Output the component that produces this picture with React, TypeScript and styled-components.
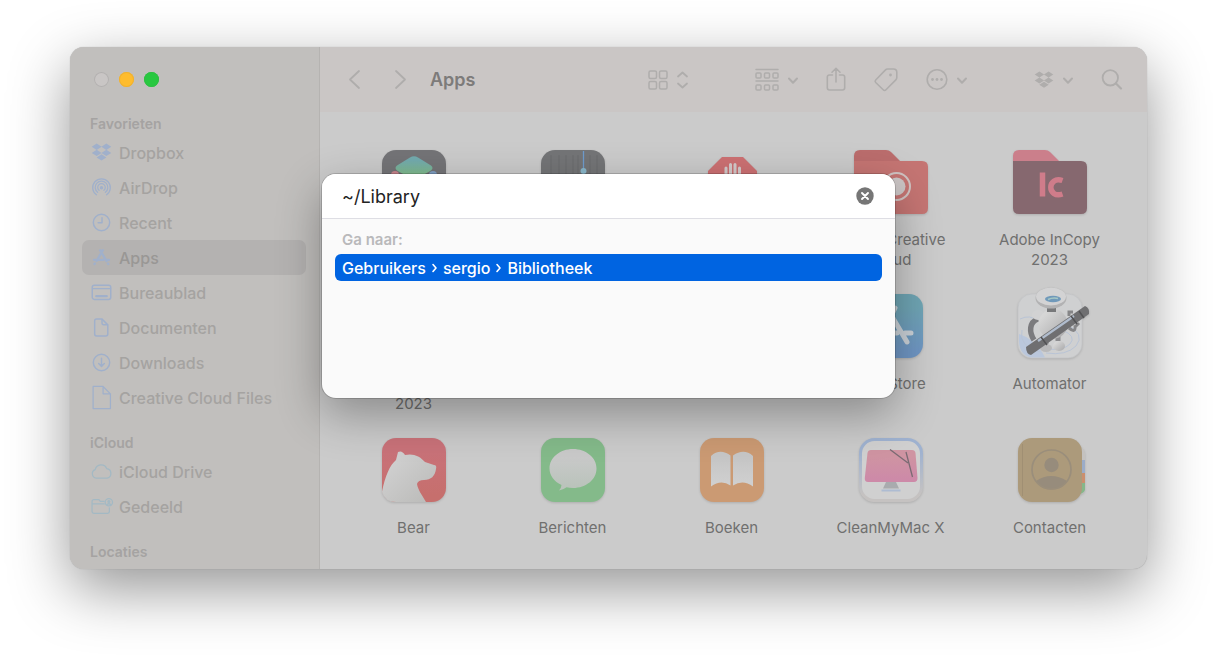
import React from "react";
import styled, { createGlobalStyle } from "styled-components";

const Global = createGlobalStyle`
  * { box-sizing: border-box; }
  body { margin: 0; background: #fff; font-family: Inter, "Liberation Sans", sans-serif; }
  button, input { font: inherit; border: 0; padding: 0; margin: 0; background: none; color: inherit; }
  svg { display: block; flex: none; overflow: visible; }
  ul { list-style: none; margin: 0; padding: 0; }
`;

const Desktop = styled.div`
  padding: 47px 69px 92px 70px;
`;

const Window = styled.main`
  position: relative;
  display: grid;
  grid-template-columns: 250px minmax(0, 1fr);
  border-radius: 14px;
  background: #cbcbcb;
  box-shadow: 0 0 1px rgba(0, 0, 0, 0.3), 0 20px 60px rgba(0, 0, 0, 0.42);
`;

const Sidebar = styled.nav`
  padding: 25px 13px 5px 12px;
  border-right: 1px solid #b5b3b1;
  border-radius: 14px 0 0 14px;
  background: #c1bfbd;
`;

const TrafficLights = styled.div`
  display: flex;
  gap: 10px;
  padding: 0 12px;
  margin-bottom: 26px;
`;

const Light = styled.button<{ $color: string; $ring: string }>`
  width: 15px;
  height: 15px;
  border-radius: 50%;
  background: ${(p) => p.$color};
  box-shadow: inset 0 0 0 1px ${(p) => p.$ring};
`;

const SectionTitle = styled.h2`
  margin: 0;
  padding-left: 8px;
  font-size: 14px;
  line-height: 22px;
  font-weight: 600;
  color: #a5a3a2;
`;

const SectionList = styled.ul`
  margin-bottom: 17px;
`;

const SideLink = styled.a<{ $active?: boolean }>`
  display: flex;
  align-items: center;
  gap: 7px;
  height: 35px;
  padding-left: 9px;
  border-radius: 7px;
  font-size: 16px;
  font-weight: 500;
  text-decoration: none;
  color: ${(p) => (p.$active ? "#999795" : "#a5a3a1")};
  background: ${(p) => (p.$active ? "#b4b2b1" : "transparent")};
`;

const SideIcon = styled.svg<{ $tint?: string }>`
  color: ${(p) => p.$tint || "#a0b0cb"};
`;

const Content = styled.section`
  min-width: 0;
`;

const Toolbar = styled.header`
  display: flex;
  align-items: center;
  height: 65px;
  padding: 0 24px 0 28px;
  border-radius: 0 14px 0 0;
  background: #cac6c5;
  color: #afadac;
`;

const NavButtons = styled.div`
  display: flex;
  gap: 31px;
`;

const Title = styled.h1`
  margin: 0 auto 0 23px;
  font-size: 18px;
  line-height: 24px;
  font-weight: 600;
  color: #7d7b7a;
`;

const Tools = styled.div<{ $gap: number }>`
  display: flex;
  align-items: center;
  gap: ${(p) => p.$gap}px;
`;

const ToolButton = styled.button`
  display: flex;
  align-items: center;
  gap: 9px;
`;

const AppGrid = styled.ul`
  display: grid;
  grid-template-columns: repeat(5, minmax(0, 1fr));
  row-gap: 24px;
  padding: 38px 18px 11px 14px;
`;

const AppCell = styled.li`
  display: flex;
  flex-direction: column;
  align-items: center;
  gap: 16px;
  height: 120px;
`;

const AppArt = styled.svg`
  filter: drop-shadow(0 1px 1px rgba(0, 0, 0, 0.14));
`;

const AppName = styled.span`
  font-size: 15px;
  line-height: 20px;
  text-align: center;
  white-space: pre-line;
  color: #70706f;
`;

const Overlay = styled.div`
  position: absolute;
  inset: 127px 0 auto;
  display: flex;
  justify-content: center;
`;

const GoTo = styled.form`
  width: 573px;
  padding-bottom: 117px;
  border-radius: 14px;
  background: #fafafa;
  box-shadow: 0 0 0 1px rgba(0, 0, 0, 0.16), 0 16px 46px rgba(0, 0, 0, 0.32);
`;

const PathRow = styled.label`
  display: flex;
  align-items: center;
  height: 45px;
  padding: 0 21px 0 20px;
  border-bottom: 1px solid #dedee4;
  border-radius: 14px 14px 0 0;
  background: #fff;
`;

const PathInput = styled.input`
  flex: 1;
  min-width: 0;
  height: 28px;
  font-size: 18px;
  color: #232323;
  outline: none;
`;

const Hint = styled.h2`
  margin: 0;
  padding: 11px 20px 4px;
  font-size: 15px;
  line-height: 20px;
  font-weight: 600;
  color: #b9b9bb;
`;

const Suggestion = styled.button`
  display: flex;
  align-items: center;
  gap: 6px;
  width: calc(100% - 26px);
  height: 27px;
  margin: 0 13px;
  padding: 0 7px;
  border-radius: 6px;
  background: #0064e1;
  color: #fff;
  font-size: 16px;
  font-weight: 500;
`;

const line = {
  fill: "none",
  stroke: "currentColor",
  strokeWidth: 1.4,
  strokeLinecap: "round" as const,
  strokeLinejoin: "round" as const,
};

const DropboxShape = () => (
  <path
    fill="currentColor"
    d="M5.400 1.500 10.100 4.500 5.400 7.500.7 4.500ZM14.600 1.500 19.300 4.500 14.600 7.500 9.900 4.500ZM5.400 7.400 10.100 10.400 5.400 13.400 .7 10.400ZM14.600 7.400 19.300 10.400 14.600 13.400 9.900 10.400ZM10 11.700 14.700 14.700 10 17.700 5.300 14.700Z"
  />
);

const sideArt: Record<string, React.ReactNode> = {
  dropbox: <DropboxShape />,
  airdrop: (
    <g {...line} strokeWidth={1.2}>
      <path d="M5.200 17A8.400 8.400 0 1 1 14.800 17" />
      <path d="M6.300 14.600A6 6 0 1 1 13.700 14.600" />
      <path d="M7.700 12.700A3.600 3.600 0 1 1 12.300 12.700" />
      <circle cx="10" cy="10.200" r="1" fill="currentColor" />
    </g>
  ),
  recent: (
    <g {...line}>
      <circle cx="10" cy="10" r="7.800" />
      <path d="M10.500 5.500V10.300H6.800" />
    </g>
  ),
  apps: (
    <g {...line} strokeWidth={2.200}>
      <path d="M11.300 3 5.300 13.200M8.700 3 14.800 13.400M2.800 12.200H12M15 12.200H17.200M3.700 15.600 3.300 16.200M16.200 15.800 16.500 16.200" />
    </g>
  ),
  desktop: (
    <g {...line}>
      <rect x="1.200" y="3" width="17.600" height="13.600" rx="2" />
      <path d="M1.500 6.300H18.500" />
      <path d="M5 13.500H15" strokeWidth={2.200} />
    </g>
  ),
  file: (
    <g {...line}>
      <path d="M5.200 2H10.500L16 7.500V16.200Q16 18 14.200 18H5.200Q3.500 18 3.500 16.200V3.800Q3.500 2 5.200 2Z" />
      <path d="M10.500 2.300V6Q10.500 7.400 12 7.400H15.700" />
    </g>
  ),
  download: (
    <g {...line}>
      <circle cx="10" cy="10" r="7.800" />
      <path d="M10 6V13.600M7.300 11 10 13.700 12.700 11" />
    </g>
  ),
  plainFile: (
    <g {...line} strokeWidth={1.200}>
      <path d="M2 -.5H11.500L18.500 6.500V20.500H2ZM11.500 -.5V6.500H18.500" />
    </g>
  ),
  cloud: (
    <path
      {...line}
      strokeWidth={1.200}
      d="M5 16.300A4.200 4.200 0 0 1 4 8.200 5.800 5.800 0 0 1 15 7.300 4.600 4.600 0 0 1 15.500 16.300Z"
    />
  ),
  shared: (
    <g {...line} strokeWidth={1.200}>
      <path d="M12.500 5.200H9L7.500 3.500H2.800Q1 3.500 1 5.200V14.800Q1 16.500 2.800 16.500H15.800Q17.500 16.500 17.500 14.800V11.200M1 7.600H12.500" />
      <circle cx="17" cy="6" r="3.500" />
      <circle cx="17" cy="5.200" r=".9" fill="currentColor" />
      <path d="M15 8.300Q17 6.500 19 8.300" />
    </g>
  ),
};

const sections = [
  {
    title: "Favorieten",
    items: [
      ["Dropbox", "dropbox"],
      ["AirDrop", "airdrop"],
      ["Recent", "recent"],
      ["Apps", "apps"],
      ["Bureaublad", "desktop"],
      ["Documenten", "file"],
      ["Downloads", "download"],
      ["Creative Cloud Files", "plainFile"],
    ],
  },
  {
    title: "iCloud",
    tint: "#a3b9c4",
    items: [
      ["iCloud Drive", "cloud"],
      ["Gedeeld", "shared"],
    ],
  },
];

const Tile = ({ fill }: { fill: string }) => <rect width="64" height="64" rx="14" fill={fill} />;

const FolderShape = ({ tab, front }: { tab: string; front: string }) => (
  <>
    <path fill={tab} d="M-5 14V6Q-5 0 1 0H27Q30 0 32 2L43 13V18H-5Z" />
    <path fill={front} d="M-5 11H63Q69 11 69 17V58Q69 64 63 64H1Q-5 64 -5 58Z" />
  </>
);

const art: Record<string, React.ReactNode> = {
  layers: (
    <>
      <Tile fill="#747477" />
      <circle cx="13" cy="25" r="4" fill="#c9858d" />
      <circle cx="51" cy="25" r="4" fill="#7f9fc4" />
      <path fill="url(#layerFill)" d="M28 7.500Q32 5 36 7.500L49 15.500Q52 18 49 20.500L36 28H28L15 20.500Q12 18 15 15.500Z" />
    </>
  ),
  wave: (
    <>
      <Tile fill="#747577" />
      <path stroke="#6b6c6e" d="M10 5V60M18 5V60M25 5V60M32 5V60M37 5V60M49 5V60M56 5V60" />
      <path stroke="#6f9ccd" strokeWidth="1.300" d="M42.500 1V64" />
      <circle cx="42.500" cy="21" r="3" fill="#8bb9cc" />
    </>
  ),
  stop: (
    <>
      <path fill="#cd7173" d="M22 7H43L57 21V43L43 57H22L8 43V21Z" />
      <path stroke="#d5cbcb" strokeWidth="3" strokeLinecap="round" d="M26 34V18M30.500 34V14.500M35 34V14.500M39.500 34V18" />
    </>
  ),
  creative: (
    <>
      <FolderShape tab="#bb6d6d" front="#c57573" />
      <circle cx="37.500" cy="36.500" r="13.500" fill="none" stroke="#d0c4c3" strokeWidth="2" />
      <circle cx="37.500" cy="36.500" r="9" fill="#cdc7c7" />
      <circle cx="32" cy="36.500" r="4" fill="#c57573" />
    </>
  ),
  incopy: (
    <>
      <FolderShape tab="#cb7f8b" front="#86686f" />
      <g fill="none" stroke="#cf7c8a" strokeWidth="5.500">
        <path d="M24.500 22.500V46.500" />
        <path d="M44.500 30.500C37 28 32.800 32.500 32.800 37.300S37 46.500 44.500 44" />
      </g>
    </>
  ),
  store: (
    <>
      <Tile fill="url(#storeFill)" />
      <g stroke="#cbd2d8" strokeWidth="5" strokeLinecap="round">
        <path d="M36 14 20 46M28 14 48 48M10 39H38M46 39H52" />
      </g>
    </>
  ),
  automator: (
    <>
      <rect width="64" height="64" rx="14" fill="#cfd0d1" stroke="#c2c3c5" strokeWidth=".7" />
      <path d="M1 40Q14 44 24 58L27 63.500H14Q2 62 1 48Z" fill="#bac7dc" />
      <g fill="none" stroke="#b9c4d6" strokeWidth="1">
        <path d="M2 25Q12 20 20 27M4 36Q0 52 22 58M48 30Q68 40 58 52 48 62 28 59M44 36Q59 42 52 50 45 57 30 55" />
      </g>
      <ellipse cx="28" cy="54" rx="6" ry="4" fill="#b9b9ba" />
      <ellipse cx="41" cy="52" rx="6" ry="5" fill="url(#robotFill)" />
      <path d="M28 42V50M40 42V47" stroke="#8c8c8f" strokeWidth="5" />
      <path d="M20 25C11 28 11 38 16 46" fill="none" stroke="#7b7b7e" strokeWidth="5.500" />
      <ellipse cx="20" cy="21" rx="6" ry="5" fill="#d2d2d3" />
      <ellipse cx="35" cy="30" rx="14.500" ry="15" fill="url(#robotFill)" />
      <path d="M29 14H38V18H29Z" fill="#77787a" />
      <ellipse cx="33" cy="4" rx="15.500" ry="10.500" fill="#b2b2b3" />
      <ellipse cx="33" cy="2.500" rx="15" ry="9" fill="#d3d3d4" />
      <ellipse cx="35" cy="5" rx="8" ry="3.300" fill="#7099ba" />
      <path d="M30 5.500Q35 3 40 4.500" stroke="#a6c8c5" strokeWidth="1.500" fill="none" />
      <path d="M51 22V18H55M61 29 57 33M51 34Q58 40 57 31" fill="none" stroke="#858587" strokeWidth="3" />
      <path d="M8 53 67 12Q72 14 71 20L13 61Q8 60 8 53Z" fill="#6f6f71" />
      <path d="M20 47 56 22" stroke="#b0bccd" strokeWidth="2.200" />
      <path d="M23 43 29 51M53 22 59 30M61 17 66 24" stroke="#525254" strokeWidth="1.500" />
    </>
  ),
  bear: (
    <>
      <Tile fill="url(#bearFill)" />
      <path
        fill="url(#furFill)"
        d="M0 54C3 38 8 27 14 22L16 14Q20 12 23 17C31 15 38 18 43 24L52 27Q55 27 54 31C53 38 49 42 42 42Q36 42 35 46C36 52 40 57 44 64H14Q3 64 0 54Z"
      />
    </>
  ),
  messages: (
    <>
      <Tile fill="#84ba8a" />
      <path
        fill="url(#bubbleFill)"
        d="M32 11C45 11 55.500 19.500 55.500 30.500S45 50 32 50Q28.500 50 25.500 49.300 22 52 18 52.500 20.500 49.500 20.500 47C13 43.500 8.500 37.500 8.500 30.500 8.500 19.500 19 11 32 11Z"
      />
    </>
  ),
  books: (
    <>
      <Tile fill="#cb9a73" />
      <path fill="url(#pageFill)" d="M11 18Q20 10 30.500 17.500V47.500Q21 41 11 48.500ZM33 17.500Q44 10 53 18V48.500Q43 41 33 47.500Z" />
    </>
  ),
  clean: (
    <>
      <rect x="1.500" y="1.500" width="61" height="61" rx="14" fill="#d0d0d0" stroke="url(#cleanRing)" strokeWidth="3" />
      <path fill="url(#screenFill)" d="M12 12H53Q56 12 56.500 15L58.500 40Q58.500 44 55 44H9Q5.500 44 5.800 40L8.500 15Q9 12 12 12Z" />
      <path fill="#a9abae" d="M27 44H37L40 50.500H24Z" />
      <path stroke="#aebcd2" strokeWidth="2" d="M22.500 52.500H41.500" />
      <path fill="none" stroke="#7a6b73" strokeWidth="1.300" d="M31 11.500 49 25M47 14 53.500 39" />
    </>
  ),
  contacts: (
    <>
      <path fill="#c4c2c0" d="M60 8Q67 10 67 16V52Q66 56 60 57Z" />
      <path fill="#9bacc8" d="M60 22H67V35H60Z" />
      <path fill="#cb8f6e" d="M60 35H67V45H60Z" />
      <path fill="#85b78a" d="M60 45H67V52Q66 55 60 57Z" />
      <Tile fill="#ac9a7b" />
      <path stroke="#a08f73" d="M4.500 6V58" />
      <path fill="#978c7c" d="M18 43Q33 33 49 43 42 51.500 33 51.500T18 43Z" />
      <circle cx="33.500" cy="27" r="7.200" fill="#978c7c" />
      <circle cx="33.500" cy="31.500" r="19.500" fill="none" stroke="#9a8e7b" strokeWidth="1.700" />
    </>
  ),
};

const apps: { art?: string; name?: string }[] = [
  { art: "layers" },
  { art: "wave" },
  { art: "stop" },
  { art: "creative", name: "Adobe Creative\nCloud" },
  { art: "incopy", name: "Adobe InCopy\n2023" },
  { name: "\u00a0\n2023" },
  {},
  {},
  { art: "store", name: "App Store" },
  { art: "automator", name: "Automator" },
  { art: "bear", name: "Bear" },
  { art: "messages", name: "Berichten" },
  { art: "books", name: "Boeken" },
  { art: "clean", name: "CleanMyMac X" },
  { art: "contacts", name: "Contacten" },
];

const Gradient = ({ id, from, to, x = 0 }: { id: string; from: string; to: string; x?: number }) => (
  <linearGradient id={id} x1="0" y1="0" x2={x} y2="1">
    <stop offset=".2" stopColor={from} />
    <stop offset=".9" stopColor={to} />
  </linearGradient>
);

const Gradients = () => (
  <defs>
    <Gradient id="layerFill" from="#73abae" to="#82bd88" />
    <Gradient id="storeFill" from="#6fa5b4" to="#6f96c4" />
    <Gradient id="bearFill" from="#c97279" to="#c66f6d" />
    <Gradient id="furFill" from="#cfcfcf" to="#bcbcba" x={1} />
    <Gradient id="robotFill" from="#d6d6d6" to="#adadae" x={1} />
    <Gradient id="bubbleFill" from="#c9c9c9" to="#bac3bb" />
    <Gradient id="pageFill" from="#c6c6c6" to="#cfcfcf" />
    <Gradient id="cleanRing" from="#9fb2d0" to="#c5c2c1" />
    <Gradient id="screenFill" from="#cf94a2" to="#cd8aa8" />
  </defs>
);

const Chevron = () => (
  <svg width="10" height="20" viewBox="0 0 10 20">
    <path {...line} strokeWidth={2} d="M1 8.500 5 12.700 9 8.500" />
  </svg>
);

export default function App() {
  return (
    <>
      <Global />
      <Desktop>
        <Window>
          <Sidebar>
            <TrafficLights>
              <Light type="button" aria-label="Sluit" $color="#c9c6c5" $ring="#b3b1b0" />
              <Light type="button" aria-label="Minimaliseer" $color="#febc2e" $ring="#eeb132" />
              <Light type="button" aria-label="Zoom" $color="#28c840" $ring="#2fbf43" />
            </TrafficLights>
            {sections.map((section) => (
              <React.Fragment key={section.title}>
                <SectionTitle>{section.title}</SectionTitle>
                <SectionList>
                  {section.items.map(([label, icon]) => (
                    <li key={label}>
                      <SideLink href="#" $active={label === "Apps"}>
                        <SideIcon width="21" height="21" viewBox="0 0 20 20" $tint={section.tint}>
                          {sideArt[icon]}
                        </SideIcon>
                        {label}
                      </SideLink>
                    </li>
                  ))}
                </SectionList>
              </React.Fragment>
            ))}
            <SectionTitle>Locaties</SectionTitle>
          </Sidebar>

          <Content>
            <Toolbar>
              <NavButtons>
                <ToolButton type="button" aria-label="Vorige">
                  <svg width="14" height="20" viewBox="0 0 14 20">
                    <path {...line} strokeWidth={1.800} d="M11 1 2 9.500 11 18" />
                  </svg>
                </ToolButton>
                <ToolButton type="button" aria-label="Volgende">
                  <svg width="14" height="20" viewBox="0 0 14 20">
                    <path {...line} strokeWidth={1.800} d="M3 1 12 9.500 3 18" />
                  </svg>
                </ToolButton>
              </NavButtons>
              <Title>Apps</Title>
              <Tools $gap={67}>
                <ToolButton type="button" aria-label="Weergave">
                  <svg width="20" height="20" viewBox="0 0 20 20">
                    <g {...line} strokeWidth={1.500}>
                      <rect x="1" y="1" width="7.500" height="7.500" rx="1.500" />
                      <rect x="11.500" y="1" width="7.500" height="7.500" rx="1.500" />
                      <rect x="1" y="11.500" width="7.500" height="7.500" rx="1.500" />
                      <rect x="11.500" y="11.500" width="7.500" height="7.500" rx="1.500" />
                    </g>
                  </svg>
                  <svg width="11" height="20" viewBox="0 0 11 20">
                    <path {...line} strokeWidth={1.800} d="M1 6.500 5.500 2.500 10 6.500M1 13.500 5.500 17.500 10 13.500" />
                  </svg>
                </ToolButton>
                <Tools $gap={28}>
                  <ToolButton type="button" aria-label="Groepeer">
                    <svg width="24" height="24" viewBox="0 0 24 24">
                      <g {...line} strokeWidth={1.500}>
                        <path d="M1 1.500H23M1 13H23" />
                        {[1, 9.500, 18].map((x) => (
                          <React.Fragment key={x}>
                            <rect x={x} y="5" width="5" height="5" rx="1" />
                            <rect x={x} y="17" width="5" height="5" rx="1" />
                          </React.Fragment>
                        ))}
                      </g>
                    </svg>
                    <Chevron />
                  </ToolButton>
                  <ToolButton type="button" aria-label="Deel">
                    <svg width="20" height="26" viewBox="0 0 20 26">
                      <path
                        {...line}
                        strokeWidth={1.600}
                        d="M6.500 8H3.500Q1.300 8 1.300 10.200V20.800Q1.300 23 3.500 23H16.500Q18.700 23 18.700 20.800V10.200Q18.700 8 16.500 8H13.500M10 15V1.500M6 5.200 10 1.300 14 5.200"
                      />
                    </svg>
                  </ToolButton>
                  <ToolButton type="button" aria-label="Tags">
                    <svg width="24" height="24" viewBox="0 0 24 24">
                      <path
                        {...line}
                        strokeWidth={1.600}
                        d="M13.500 1H19.500Q22.800 1 22.800 4.300V9.500Q22.800 10.900 21.800 11.900L12 21.800Q10.600 23.200 9.200 21.800L1.700 14.500Q.5 13.200 1.700 12L11.500 1.900Q12.300 1 13.500 1Z"
                      />
                      <circle cx="16.500" cy="7" r="1.400" fill="currentColor" />
                    </svg>
                  </ToolButton>
                  <ToolButton type="button" aria-label="Meer">
                    <svg width="22" height="22" viewBox="0 0 22 22">
                      <circle {...line} strokeWidth={1.600} cx="11" cy="10.500" r="9.800" />
                      <g fill="currentColor">
                        <circle cx="6.500" cy="10.500" r="1.400" />
                        <circle cx="11" cy="10.500" r="1.400" />
                        <circle cx="15.500" cy="10.500" r="1.400" />
                      </g>
                    </svg>
                    <Chevron />
                  </ToolButton>
                </Tools>
                <Tools $gap={28}>
                  <ToolButton type="button" aria-label="Dropbox">
                    <svg width="20" height="20" viewBox="0 0 20 20">
                      <DropboxShape />
                    </svg>
                    <Chevron />
                  </ToolButton>
                  <ToolButton type="button" aria-label="Zoek">
                    <svg width="22" height="22" viewBox="0 0 22 22">
                      <g {...line} strokeWidth={1.800}>
                        <circle cx="9.300" cy="8.800" r="7.700" />
                        <path d="M15 14.500 20 19.500" strokeWidth={2.200} />
                      </g>
                    </svg>
                  </ToolButton>
                </Tools>
              </Tools>
            </Toolbar>
            <AppGrid>
              {apps.map((app, i) => (
                <AppCell key={i}>
                  <AppArt width="64" height="64" viewBox="0 0 64 64" aria-hidden="true">
                    {i === 0 && <Gradients />}
                    {app.art && art[app.art]}
                  </AppArt>
                  {app.name && <AppName>{app.name}</AppName>}
                </AppCell>
              ))}
            </AppGrid>
          </Content>

          <Overlay>
            <GoTo onSubmit={(e) => e.preventDefault()}>
              <PathRow>
                <PathInput type="text" aria-label="Ga naar map" defaultValue="~/Library" spellCheck={false} />
                <ToolButton type="reset" aria-label="Wis">
                  <svg width="18" height="18" viewBox="0 0 18 18">
                    <circle cx="9" cy="9" r="8.700" fill="#767676" />
                    <path d="M6 6 12 12M12 6 6 12" stroke="#fff" strokeWidth="1.900" strokeLinecap="round" />
                  </svg>
                </ToolButton>
              </PathRow>
              <Hint>Ga naar:</Hint>
              <Suggestion type="submit">
                <span>Gebruikers</span>
                <svg width="5" height="9" viewBox="0 0 5 9">
                  <path {...line} strokeWidth={1.600} d="M1 1.500 4 5 1 8.500" />
                </svg>
                <span>sergio</span>
                <svg width="5" height="9" viewBox="0 0 5 9">
                  <path {...line} strokeWidth={1.600} d="M1 1.500 4 5 1 8.500" />
                </svg>
                <span>Bibliotheek</span>
              </Suggestion>
            </GoTo>
          </Overlay>
        </Window>
      </Desktop>
    </>
  );
}
